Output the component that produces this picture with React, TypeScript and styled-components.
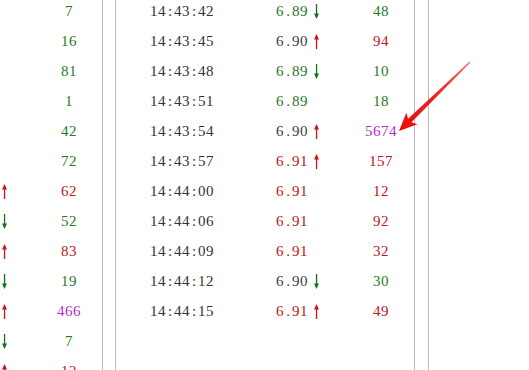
import styled, { createGlobalStyle } from "styled-components";

const GlobalStyle = createGlobalStyle`
  html, body {
    margin: 0;
    padding: 0;
    background: #ffffff;
    overflow: hidden;
  }
`;

type Tone = "up" | "down" | "flat" | "big";

const toneColor: Record<Tone, string> = {
  up: "#b81822",
  down: "#1f7a1f",
  flat: "#3c3c3c",
  big: "#b12fc2",
};

const Page = styled.div`
  display: flex;
  height: 370px;
  margin-left: -197px;
  gap: 12px;
  position: relative;
  font-family: "Liberation Serif", "Times New Roman", serif;
  font-size: 15px;
  letter-spacing: 0.5px;
`;

const Panel = styled.div`
  width: 300px;
  flex: none;
  height: 100%;
  box-sizing: border-box;
  border-left: 1px solid #b9b9b9;
  border-right: 1px solid #b9b9b9;
  overflow: hidden;
  & + & {
    margin-right: 1px;
  }
`;

const EmptyPanel = styled.div`
  flex: 1;
  height: 100%;
  border-left: 1px solid #b9b9b9;
`;

const RowList = styled.div`
  margin-top: -4px;
`;

const Row = styled.div`
  display: grid;
  grid-template-columns: 132px 100px 66px;
  height: 30px;
  line-height: 30px;
  white-space: nowrap;
`;

const TimeCell = styled.div`
  text-align: center;
  color: #333333;
`;

const PriceCell = styled.div<{ $tone: Tone }>`
  padding-left: 28px;
  color: ${({ $tone }) => toneColor[$tone]};
  display: flex;
  align-items: center;
`;

const VolCell = styled.div<{ $tone: Tone }>`
  text-align: center;
  color: ${({ $tone }) => toneColor[$tone]};
`;

/* punctuation gets a full 8px cell, like the half-width system font */
const Punct = styled.span`
  display: inline-block;
  width: 8px;
  text-align: center;
  letter-spacing: 0;
`;

const ArrowIcon = styled.svg`
  margin-left: 5px;
  flex: none;
`;

const Callout = styled.svg`
  position: absolute;
  left: 0;
  top: 0;
  pointer-events: none;
`;

function Mono({ text }: { text: string }) {
  const parts = text.split(/([:.])/);
  return (
    <span>
      {parts.map((p, i) =>
        p === ":" || p === "." ? <Punct key={i}>{p}</Punct> : p
      )}
    </span>
  );
}

function Tick({ dir }: { dir: "up" | "down" }) {
  const color = dir === "up" ? "#d0101a" : "#177017";
  return (
    <ArrowIcon width="7" height="15" viewBox="0 0 7 15">
      {dir === "up" ? (
        <>
          <rect x="2.9" y="3" width="1.3" height="12" fill={color} />
          <polygon points="3.5,0 1,5.4 6,5.4" fill={color} />
        </>
      ) : (
        <>
          <rect x="2.9" y="0" width="1.3" height="11" fill={color} />
          <polygon points="3.5,15 1,9.6 6,9.6" fill={color} />
        </>
      )}
    </ArrowIcon>
  );
}

type Trade = {
  time: string;
  price: string;
  priceTone: Tone;
  arrow?: "up" | "down";
  vol: string;
  volTone: Tone;
};

const leftTrades: Trade[] = [
  { time: "14:43:12", price: "6.89", priceTone: "down", vol: "7", volTone: "down" },
  { time: "14:43:15", price: "6.89", priceTone: "down", vol: "16", volTone: "down" },
  { time: "14:43:18", price: "6.89", priceTone: "down", vol: "81", volTone: "down" },
  { time: "14:43:21", price: "6.89", priceTone: "down", vol: "1", volTone: "down" },
  { time: "14:43:24", price: "6.89", priceTone: "down", vol: "42", volTone: "down" },
  { time: "14:43:27", price: "6.89", priceTone: "down", vol: "72", volTone: "down" },
  { time: "14:43:30", price: "6.90", priceTone: "flat", arrow: "up", vol: "62", volTone: "up" },
  { time: "14:43:33", price: "6.89", priceTone: "down", arrow: "down", vol: "52", volTone: "down" },
  { time: "14:43:36", price: "6.90", priceTone: "flat", arrow: "up", vol: "83", volTone: "up" },
  { time: "14:43:39", price: "6.89", priceTone: "down", arrow: "down", vol: "19", volTone: "down" },
  { time: "14:43:42", price: "6.90", priceTone: "flat", arrow: "up", vol: "466", volTone: "big" },
  { time: "14:43:45", price: "6.89", priceTone: "down", arrow: "down", vol: "7", volTone: "down" },
  { time: "14:43:48", price: "6.90", priceTone: "flat", arrow: "up", vol: "12", volTone: "up" },
];

const midTrades: Trade[] = [
  { time: "14:43:42", price: "6.89", priceTone: "down", arrow: "down", vol: "48", volTone: "down" },
  { time: "14:43:45", price: "6.90", priceTone: "flat", arrow: "up", vol: "94", volTone: "up" },
  { time: "14:43:48", price: "6.89", priceTone: "down", arrow: "down", vol: "10", volTone: "down" },
  { time: "14:43:51", price: "6.89", priceTone: "down", vol: "18", volTone: "down" },
  { time: "14:43:54", price: "6.90", priceTone: "flat", arrow: "up", vol: "5674", volTone: "big" },
  { time: "14:43:57", price: "6.91", priceTone: "up", arrow: "up", vol: "157", volTone: "up" },
  { time: "14:44:00", price: "6.91", priceTone: "up", vol: "12", volTone: "up" },
  { time: "14:44:06", price: "6.91", priceTone: "up", vol: "92", volTone: "up" },
  { time: "14:44:09", price: "6.91", priceTone: "up", vol: "32", volTone: "up" },
  { time: "14:44:12", price: "6.90", priceTone: "flat", arrow: "down", vol: "30", volTone: "down" },
  { time: "14:44:15", price: "6.91", priceTone: "up", arrow: "up", vol: "49", volTone: "up" },
];

function TradeList({ trades }: { trades: Trade[] }) {
  return (
    <RowList>
      {trades.map((t, i) => (
        <Row key={i}>
          <TimeCell>
            <Mono text={t.time} />
          </TimeCell>
          <PriceCell $tone={t.priceTone}>
            <Mono text={t.price} />
            {t.arrow && <Tick dir={t.arrow} />}
          </PriceCell>
          <VolCell $tone={t.volTone}>{t.vol}</VolCell>
        </Row>
      ))}
    </RowList>
  );
}

export default function App() {
  return (
    <>
      <GlobalStyle />
      <Page>
        <Panel>
          <TradeList trades={leftTrades} />
        </Panel>
        <Panel>
          <TradeList trades={midTrades} />
        </Panel>
        <EmptyPanel />
        <Callout width="726" height="370" viewBox="-197 0 726 370">
          <defs>
            <linearGradient id="callout" x1="470" y1="62" x2="399" y2="131" gradientUnits="userSpaceOnUse">
              <stop offset="0" stopColor="#f46a6a" />
              <stop offset="0.5" stopColor="#ee2020" />
              <stop offset="1" stopColor="#e80c0c" />
            </linearGradient>
          </defs>
          <polygon
            points="399,131 406.3,112.8 408.1,118.7 469.6,61.6 470.4,62.4 411.5,122.3 417.5,124.2"
            fill="url(#callout)"
          />
        </Callout>
      </Page>
    </>
  );
}
